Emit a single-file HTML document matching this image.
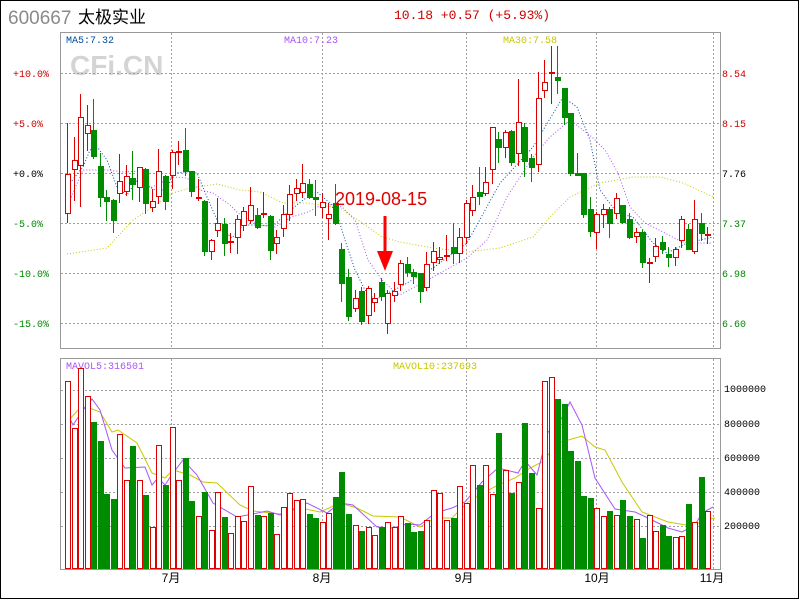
<!DOCTYPE html>
<html><head><meta charset="utf-8"><style>
html,body{margin:0;padding:0;background:#fff;}
#c{position:relative;width:800px;height:600px;overflow:hidden;}
svg{display:block}
</style></head><body><div id="c">
<svg id="s" width="800" height="600" xmlns="http://www.w3.org/2000/svg" font-family="Liberation Mono, monospace" shape-rendering="crispEdges">
<rect x="0.5" y="0.5" width="798" height="598" fill="#fff" stroke="#000" stroke-width="1"/>
<text x="8" y="24" font-family="Liberation Sans, sans-serif" font-size="19" fill="#8a8a8a">600667</text>
<text x="78" y="23" font-family="Liberation Sans, 'Noto Sans CJK SC', sans-serif" font-size="17" fill="#000">太极实业</text>
<text x="394" y="19" font-size="13" fill="#cc0000">10.18 +0.57 (+5.93%)</text>
<text x="70" y="75" font-family="Liberation Sans, sans-serif" font-weight="bold" font-size="28" fill="#d4d4d4">CFi.CN</text>
<g id="grid" stroke="#a0a0a0" stroke-width="1" stroke-dasharray="2,2" fill="none"></g>
<rect x="60.5" y="32.5" width="660" height="316" fill="none" stroke="#999"/>
<rect x="60.5" y="358.5" width="660" height="211" fill="none" stroke="#999"/>
<g font-size="10">
<text x="66" y="43" fill="#004ea0">MA5:7.32</text>
<text x="284" y="43" fill="#a855f7">MA10:7.23</text>
<text x="503" y="43" fill="#c8c800">MA30:7.58</text>
<text x="66" y="369" fill="#a855f7">MAVOL5:316501</text>
<text x="393" y="369" fill="#c8c800">MAVOL10:237693</text>
<g text-anchor="end">
<text x="49" y="77" fill="#cc0000">+10.0%</text>
<text x="43" y="127" fill="#cc0000">+5.0%</text>
<text x="43" y="177" fill="#000">+0.0%</text>
<text x="43" y="227" fill="#008800">-5.0%</text>
<text x="49" y="277" fill="#008800">-10.0%</text>
<text x="49" y="327" fill="#008800">-15.0%</text>
</g>
<text x="722" y="77" fill="#cc0000">8.54</text>
<text x="722" y="127" fill="#cc0000">8.15</text>
<text x="722" y="177" fill="#000">7.76</text>
<text x="722" y="227" fill="#008800">7.37</text>
<text x="722" y="277" fill="#008800">6.98</text>
<text x="722" y="327" fill="#008800">6.60</text>
<text x="724" y="392" fill="#000">1000000</text>
<text x="724" y="427" fill="#000">800000</text>
<text x="724" y="461" fill="#000">600000</text>
<text x="724" y="495" fill="#000">400000</text>
<text x="724" y="529" fill="#000">200000</text>
</g>
<g font-family="Liberation Sans, 'Noto Sans CJK SC', sans-serif" font-size="12" fill="#000" text-anchor="middle">
<text x="171" y="582">7月</text><text x="322" y="582">8月</text><text x="464" y="582">9月</text><text x="597" y="582">10月</text><text x="712" y="582">11月</text>
</g>
<g id="lines" fill="none" shape-rendering="auto"></g>
<g id="cand"></g>
<text x="335" y="205" font-family="Liberation Sans, sans-serif" font-size="18" fill="#e00000">2019-08-15</text>
<line x1="385" y1="216" x2="385" y2="256" stroke="#ff0000" stroke-width="3"/>
<polygon points="377,251 393,251 385,271" fill="#ff0000" shape-rendering="auto"/>
</svg>
</div>
<script>
var NS="http://www.w3.org/2000/svg",s=document.getElementById('s');
function el(p,t,a){var e=document.createElementNS(NS,t);for(var k in a)e.setAttribute(k,a[k]);p.appendChild(e);return e;}
var g=document.getElementById('grid');
[73,123,173,223,273,323].forEach(function(y){el(g,'line',{x1:61,x2:720,y1:y+.5,y2:y+.5});});
[390,424,458,492,526].forEach(function(y){el(g,'line',{x1:61,x2:720,y1:y+.5,y2:y+.5});});
[171,322,466,596,713].forEach(function(x){el(g,'line',{x1:x+.5,x2:x+.5,y1:33,y2:348});el(g,'line',{x1:x+.5,x2:x+.5,y1:359,y2:569});});
var C="R174,213,123,222;R160,169,137,200;R117,165,94,206;R125,133,105,150;G130,156,99,158;G166,197,153,206;G197,201,190,220;G200,220,199,232;R181,193,154,202;R176,191,165,195;G178,184,151,199;R167,187,167,201;G169,203,168,213;R201,207,189,211;R171,196,149,203;G176,201,175,209;R152,175,150,188;R151,151,141,164;G150,171,128,175;G171,191,171,196;R197,197,179,200;G201,251,200,255;R240,251,239,259;R223,230,198,236;G224,243,218,255;R241,241,233,252;R219,237,215,253;R211,225,207,230;R205,220,187,223;G215,227,208,228;R213,213,192,217;G216,250,215,259;R237,243,230,253;R214,228,205,236;R194,214,185,220;R188,193,179,200;R183,192,164,197;G184,197,179,198;G197,199,180,215;R202,207,193,217;R214,218,203,239;G203,223,184,224;G249,283,243,301;G277,316,269,320;R298,308,290,311;G291,321,287,324;R288,315,286,323;R298,302,293,311;G282,296,278,300;R293,323,290,333;R291,295,282,301;R263,284,260,290;G264,272,257,276;G272,276,269,283;G273,291,273,302;R264,287,252,290;R251,262,242,270;R257,259,247,263;R255,255,235,260;G247,253,223,263;R237,253,228,262;R203,237,200,243;R197,210,185,215;G192,196,167,204;R182,193,167,195;R127,169,127,183;G139,147,132,162;R132,147,130,157;G131,162,130,165;R122,153,79,165;G127,161,123,176;G158,167,154,181;R98,164,72,171;R82,90,60,97;R72,72,46,103;G77,80,46,93;G88,117,88,124;G113,173,113,175;G173,175,153,175;G173,214,173,217;G209,231,197,236;R214,232,212,248;R209,214,204,227;G209,223,207,237;R198,213,193,218;G205,222,205,223;G219,237,213,238;R232,236,228,242;G232,262,230,267;R262,262,258,282;R246,256,238,261;G242,249,236,253;G254,257,247,266;R249,257,247,265;R219,240,216,247;G229,249,224,249;R219,251,200,253;G223,233,213,240;R234,234,227,243".split(';');
var V=[381,428,368,396,422,441,494,499,434,480,446,480,495,527,445,485,427,480,458,501,516,492,530,492,517,533,516,521,486,515,516,513,534,507,493,500,499,514,518,522,513,497,472,514,525,531,527,535,527,522,527,516,523,532,531,520,490,493,520,518,486,503,465,485,465,494,433,470,493,482,423,473,508,381,377,399,404,451,461,496,498,508,516,511,515,500,516,519,538,515,531,525,536,537,536,504,522,477,511,518];
var RED="#dd0000",GRN="#008c00",cg=document.getElementById('cand');
C.forEach(function(d,i){
 var t=d[0],a=d.slice(1).split(',').map(Number),x=Math.round(67+6.535*i);
 var col=t=='R'?RED:GRN;
 el(cg,'rect',{x:x,y:a[2],width:1,height:a[3]-a[2]+1,fill:col});
 if(a[0]==a[1]){el(cg,'rect',{x:x-2,y:a[0],width:6,height:2,fill:col});}
 else if(t=='R'){
   el(cg,'rect',{x:x-2,y:a[0],width:6,height:a[1]-a[0]+1,fill:col});
   el(cg,'rect',{x:x-1,y:a[0]+1,width:4,height:Math.max(0,a[1]-a[0]-1),fill:'#fff'});
 }
 else{el(cg,'rect',{x:x-2,y:a[0],width:6,height:a[1]-a[0]+1,fill:col});}
 var vt=V[i];
 if(t=='R'){el(cg,'rect',{x:x-2,y:vt,width:6,height:569-vt,fill:col});el(cg,'rect',{x:x-1,y:vt+1,width:4,height:567-vt,fill:'#fff'});}
 else el(cg,'rect',{x:x-2,y:vt,width:6,height:569-vt,fill:col});
});
var lg=document.getElementById('lines');
function pl(p,c,dash){var a={points:p,stroke:c,'stroke-width':1};if(dash)a['stroke-dasharray']=dash;el(lg,'polyline',a);}
pl("67,254 107,248 133,220 173,193 190,188 217,184 240,190 260,192 283,203 307,203 340,208 358,220 382,237 400,242 433,248 467,252 500,248 533,237 550,217 570,197 600,183 633,177 660,177 683,183 713,197","#c8c800","1,2");
pl("70,200 83,170 107,170 123,172 140,171 150,188 173,177 187,178 200,190 213,193 230,205 238,213 258,225 275,227 292,217 308,212 325,203 342,207 355,220 368,260 382,280 393,290 400,295 433,277 467,258 487,240 507,197 533,157 550,137 570,120 592,137 605,150 618,173 630,207 645,223 665,233 682,242 695,243 712,243","#a855f7","1,2");
pl("70,183 83,167 90,150 98,148 107,160 117,187 127,195 137,180 147,185 155,190 167,190 173,173 187,172 197,173 207,197 220,227 232,238 243,225 257,225 273,226 287,213 303,200 317,192 330,203 338,217 345,240 355,270 365,290 375,300 388,293 400,287 433,268 467,243 500,183 533,147 563,97 577,107 590,140 600,190 617,213 633,217 653,243 667,253 687,243 713,237","#004ea0","1,2");
pl("67,422 80,408 87,407 100,412 112,432 118,430 137,443 152,473 165,478 173,470 190,475 203,482 217,483 240,505 253,511 280,514 300,508 320,512 340,503 357,508 373,516 400,517 420,527 435,518 452,518 468,502 485,492 498,485 515,478 530,468 542,462 558,443 582,436 595,447 605,450 622,482 642,512 668,522 692,526 705,520 715,518","#c8c800");
pl("68,415 73,425 83,410 92,399 100,410 112,450 125,468 145,467 152,485 158,478 165,485 173,473 183,460 197,475 213,503 237,517 253,514 267,511 280,515 307,503 327,513 340,503 353,505 377,527 393,528 407,524 420,525 435,513 452,508 465,502 482,482 498,468 518,473 525,461 537,475 548,432 558,425 570,402 582,425 595,478 615,509 635,512 648,518 668,528 682,532 695,525 702,513 713,507","#a855f7");
</script>
</body></html>
